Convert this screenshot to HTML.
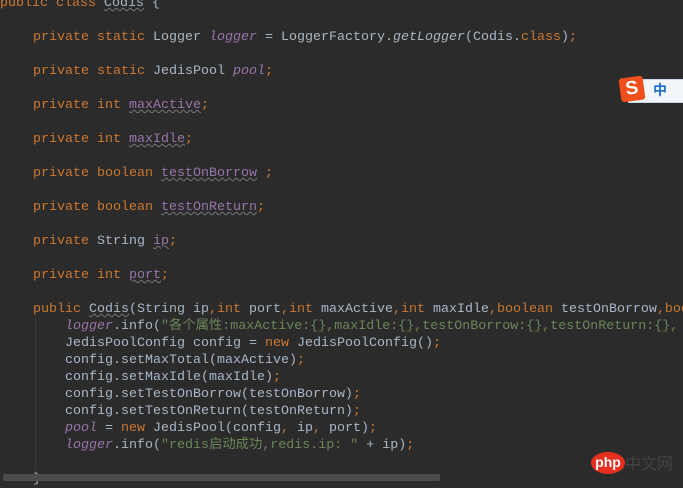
<!DOCTYPE html><html><head><meta charset="utf-8"><style>
body{margin:0;width:683px;height:481px;background:#2b2b2b;overflow:hidden;position:relative;font-family:"Liberation Mono","Noto Sans CJK SC",monospace;font-size:13.33px;color:#a9b7c6}
.l{position:absolute;white-space:pre;line-height:17px;height:17px}
.k{color:#cc7832}.f{color:#9876aa;font-style:italic}.s{color:#6a8759}.i{font-style:italic}
.u{text-decoration:underline wavy #777;text-decoration-thickness:1px}
</style></head><body>
<div class="l" style="left:0;top:-5px"><span class="k">public class </span><span class="u">Codis</span> {</div>
<div class="l" style="left:33px;top:29px"><span class="k">private static </span>Logger <span class="f">logger</span> = LoggerFactory.<span class="i">getLogger</span>(Codis.<span class="k">class</span>)<span class="k">;</span></div>
<div class="l" style="left:33px;top:63px"><span class="k">private static </span>JedisPool <span class="f">pool</span><span class="k">;</span></div>
<div class="l" style="left:33px;top:97px"><span class="k">private int </span><span class="u" style="color:#9876aa">maxActive</span><span class="k">;</span></div>
<div class="l" style="left:33px;top:131px"><span class="k">private int </span><span class="u" style="color:#9876aa">maxIdle</span><span class="k">;</span></div>
<div class="l" style="left:33px;top:165px"><span class="k">private boolean </span><span class="u" style="color:#9876aa">testOnBorrow</span> <span class="k">;</span></div>
<div class="l" style="left:33px;top:199px"><span class="k">private boolean </span><span class="u" style="color:#9876aa">testOnReturn</span><span class="k">;</span></div>
<div class="l" style="left:33px;top:233px"><span class="k">private </span>String <span class="u" style="color:#9876aa">ip</span><span class="k">;</span></div>
<div class="l" style="left:33px;top:267px"><span class="k">private int </span><span class="u" style="color:#9876aa">port</span><span class="k">;</span></div>
<div class="l" style="left:33px;top:301px"><span class="k">public </span><span class="u">Codis</span>(String ip<span class="k">,int </span>port<span class="k">,int </span>maxActive<span class="k">,int </span>maxIdle<span class="k">,boolean </span>testOnBorrow<span class="k">,boo</span></div>
<div class="l" style="left:65px;top:318px"><span class="f">logger</span>.info(<span class="s">"各个属性:maxActive:{},maxIdle:{},testOnBorrow:{},testOnReturn:{},</span></div>
<div class="l" style="left:65px;top:335px">JedisPoolConfig config = <span class="k">new </span>JedisPoolConfig()<span class="k">;</span></div>
<div class="l" style="left:65px;top:352px">config.setMaxTotal(maxActive)<span class="k">;</span></div>
<div class="l" style="left:65px;top:369px">config.setMaxIdle(maxIdle)<span class="k">;</span></div>
<div class="l" style="left:65px;top:386px">config.setTestOnBorrow(testOnBorrow)<span class="k">;</span></div>
<div class="l" style="left:65px;top:403px">config.setTestOnReturn(testOnReturn)<span class="k">;</span></div>
<div class="l" style="left:65px;top:420px"><span class="f">pool </span>= <span class="k">new </span>JedisPool(config<span class="k">, </span>ip<span class="k">, </span>port)<span class="k">;</span></div>
<div class="l" style="left:65px;top:437px"><span class="f">logger</span>.info(<span class="s">"redis启动成功,redis.ip: "</span> + ip)<span class="k">;</span></div>
<div style="position:absolute;left:35px;top:318px;width:1px;height:152px;background:#3b3b3b"></div>
<div class="l" style="left:33px;top:471px">}</div>
<div style="position:absolute;left:3px;top:474px;width:437px;height:7px;background:#4b4b4b;border-radius:2px"></div>
<div style="position:absolute;left:628px;top:79px;width:55px;height:22px;background:#f2f6fb;border:1px solid #c9d6e6"></div>
<div style="position:absolute;left:620px;top:77px;width:24px;height:24px;background:#f04e1a;border-radius:3px;transform:rotate(-8deg);color:#fff;font:bold 19px/24px 'Liberation Sans',sans-serif;text-align:center">S</div>
<div style="position:absolute;left:653px;top:81px;color:#1f6fc4;font:bold 14px/18px 'Noto Sans CJK SC',sans-serif">中</div>
<div style="position:absolute;left:591px;top:452px;width:34px;height:22px;background:#e62f1e;border-radius:50%;color:#fff;font:bold 14px/20px 'Liberation Sans',sans-serif;text-align:center">php</div>
<div style="position:absolute;left:625px;top:452px;color:#444;font:16px/20px 'Noto Sans CJK SC',sans-serif">中文网</div>
</body></html>
